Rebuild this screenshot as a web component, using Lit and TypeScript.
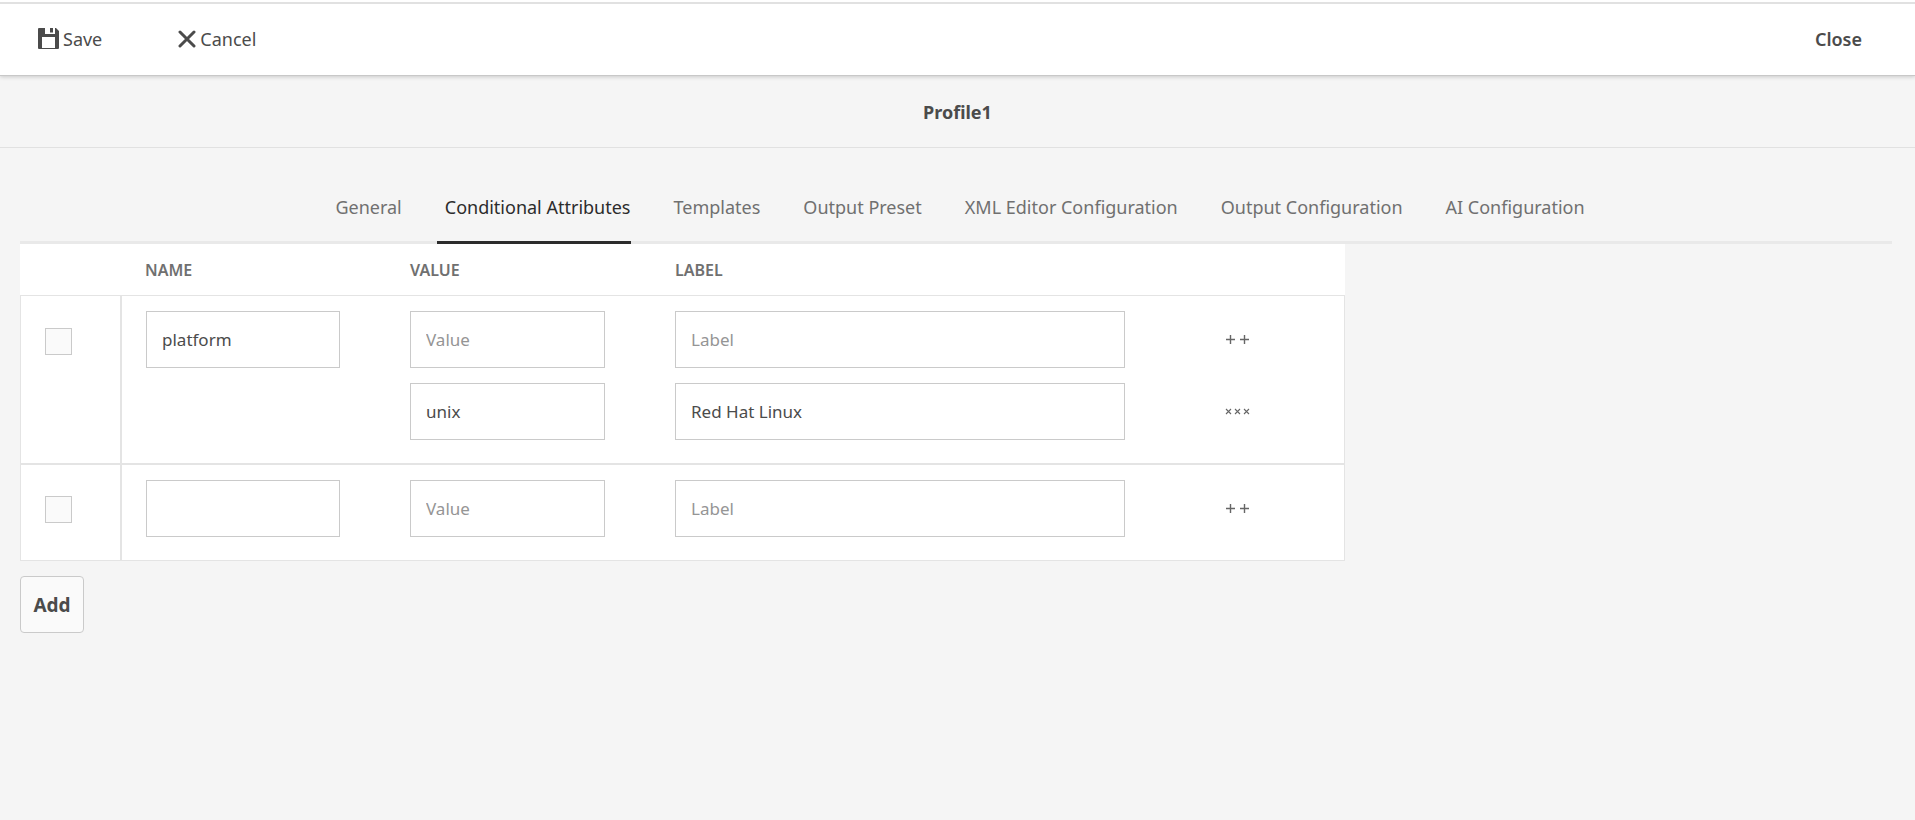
import { LitElement, html, css, svg, nothing } from "lit";
import { customElement, property, state } from "lit/decorators.js";
import { classMap } from "lit/directives/class-map.js";

interface Entry {
  value: string;
  label: string;
}

interface Attribute {
  name: string;
  entries: Entry[];
}

const TABS = [
  "General",
  "Conditional Attributes",
  "Templates",
  "Output Preset",
  "XML Editor Configuration",
  "Output Configuration",
  "AI Configuration",
];

const plus = (x: number) => svg`<path d="M${x} 4.5h9M${x + 4.5} 0v9" />`;
const cross = (x: number) => svg`<path class="thin" d="M${x} 2l5 5M${x + 5} 2l-5 5" />`;

@customElement("profile-toolbar")
export class ProfileToolbar extends LitElement {
  static styles = css`
    :host {
      display: block;
      position: relative;
      padding-top: 2px;
      background: #fff;
      border-bottom: 1px solid #c8c8c8;
      box-shadow: 0 1px 4px rgba(0, 0, 0, 0.18);
    }
    .bar {
      display: flex;
      align-items: center;
      gap: 76px;
      height: 69px;
      padding: 0 53px 2px 38px;
      border-top: 2px solid #e1e1e1;
    }
    .action {
      display: flex;
      align-items: center;
      gap: 4px;
      padding: 0;
      border: 0;
      background: none;
      color: #4b4b4b;
      font: 18px/24px "Noto Sans", sans-serif;
      cursor: pointer;
    }
    .close {
      margin-left: auto;
      font-weight: 600;
    }
    .icon {
      display: block;
      fill: #4b4b4b;
    }
    .stroke {
      fill: none;
      stroke: #4b4b4b;
      stroke-width: 3;
      stroke-linecap: round;
    }
  `;

  render() {
    return html`
      <div class="bar">
        <button class="action" type="button">
          <svg class="icon" width="21" height="21" viewBox="0 0 21 21" aria-hidden="true">
            <path
              fill-rule="evenodd"
              d="M0 1q0-1 1-1H7V6H17V0h1l3 3V20q0 1-1 1H1q-1 0-1-1ZM4 9V20H17V9ZM12 0h3V4.5h-3Z"
            />
          </svg>
          Save
        </button>
        <button class="action" type="button">
          <svg class="icon" width="18" height="18" viewBox="0 0 18 18" aria-hidden="true">
            <path class="stroke" d="M2 2L16 16M16 2L2 16" />
          </svg>
          Cancel
        </button>
        <button class="action close" type="button">Close</button>
      </div>
    `;
  }
}

@customElement("profile-tabs")
export class ProfileTabs extends LitElement {
  static styles = css`
    :host {
      display: block;
    }
    .tabs {
      display: flex;
      justify-content: center;
      gap: 35px;
      border-bottom: 3px solid #e9e9e9;
    }
    .tab {
      padding: 17px 0 22px 8px;
      margin-bottom: -3px;
      border: 0;
      border-bottom: 3px solid transparent;
      background: none;
      color: #707070;
      font: 18px/24px "Noto Sans", sans-serif;
      white-space: nowrap;
      cursor: pointer;
    }
    .selected {
      color: #2c2c2c;
      border-bottom-color: #2c2c2c;
    }
  `;

  @property() selected = "";

  render() {
    return html`
      <div class="tabs" role="tablist">
        ${TABS.map(
          (name) => html`<button
            type="button"
            role="tab"
            aria-selected=${name === this.selected}
            class=${classMap({ tab: true, selected: name === this.selected })}
            @click=${() => (this.selected = name)}
          >${name}</button>`,
        )}
      </div>
    `;
  }
}

@customElement("attribute-table")
export class AttributeTable extends LitElement {
  static styles = css`
    :host {
      display: block;
    }
    .table {
      width: calc(100% - 547px);
      min-width: 1000px;
      table-layout: fixed;
      border-collapse: separate;
      border-spacing: 0;
      background: #fff;
    }
    .check-col {
      width: 101px;
    }
    .field-col {
      width: 20%;
    }
    .action-col {
      width: 194px;
    }
    .head {
      height: 52px;
      padding: 0 0 0 24px;
      border-bottom: 1px solid #e4e4e4;
      box-sizing: border-box;
      color: #707070;
      font: 600 16px/20px "Noto Sans", sans-serif;
      text-align: left;
      text-transform: uppercase;
    }
    .cell {
      padding: 15px 0 23px 24px;
      vertical-align: top;
      border-bottom: 1px solid #e4e4e4;
    }
    .check-cell {
      padding: 32px 0 0 24px;
      border-left: 1px solid #e4e4e4;
      border-right: 1px solid #e4e4e4;
    }
    .name-cell {
      border-left: 1px solid #e4e4e4;
    }
    .last-cell {
      padding-left: 74px;
      border-right: 1px solid #e4e4e4;
    }
    .next .cell {
      border-top: 1px solid #e4e4e4;
    }
    .next .check-cell {
      padding-top: 31px;
    }
    .check {
      display: block;
      appearance: none;
      width: 27px;
      height: 27px;
      margin: 0;
      border: 1px solid #cacaca;
      background: #fafafa;
    }
    .check:checked {
      background: #4b4b4b;
    }
    .stack {
      display: grid;
      gap: 15px;
    }
    .field {
      box-sizing: border-box;
      width: calc(100% - 46px);
      height: 57px;
      padding: 0 15px;
      border: 1px solid #cacaca;
      border-radius: 0;
      background: #fff;
      color: #4b4b4b;
      font: 17px/24px "Noto Sans", sans-serif;
      outline: none;
    }
    .field:focus {
      border-color: #378ef0;
    }
    .field::placeholder {
      color: #959595;
      opacity: 1;
    }
    .wide {
      width: calc(100% - 26px);
    }
    .icon-button {
      display: flex;
      align-items: center;
      justify-self: start;
      height: 57px;
      padding: 0;
      border: 0;
      background: none;
      cursor: pointer;
    }
    .glyph {
      display: block;
      fill: none;
      stroke: #666;
      stroke-width: 1.4;
    }
    .thin {
      stroke-width: 1.1;
    }
    .add {
      display: block;
      width: 64px;
      height: 57px;
      margin-top: 15px;
      padding: 0;
      border: 1px solid #cacaca;
      border-radius: 4px;
      background: #fafafa;
      color: #4b4b4b;
      font: 700 19px/24px "Noto Sans", sans-serif;
      cursor: pointer;
    }
  `;

  @state() private rows: Attribute[] = [
    {
      name: "platform",
      entries: [
        { value: "", label: "" },
        { value: "unix", label: "Red Hat Linux" },
      ],
    },
    { name: "", entries: [{ value: "", label: "" }] },
  ];

  private addRow() {
    this.rows = [...this.rows, { name: "", entries: [{ value: "", label: "" }] }];
  }

  private addEntry(row: Attribute) {
    row.entries = [...row.entries, { value: "", label: "" }];
    this.requestUpdate();
  }

  private removeEntry(row: Attribute, entry: Entry) {
    row.entries = row.entries.filter((e) => e !== entry);
    this.requestUpdate();
  }

  private renderRow(row: Attribute, index: number) {
    return html`
      <tr class=${index > 0 ? "next" : nothing}>
        <td class="cell check-cell">
          <input class="check" type="checkbox" aria-label="Select attribute" />
        </td>
        <td class="cell name-cell">
          <input class="field" type="text" aria-label="Name" .value=${row.name} />
        </td>
        <td class="cell">
          <div class="stack">
            ${row.entries.map(
              (e) => html`<input class="field" type="text" aria-label="Value" placeholder="Value" .value=${e.value} />`,
            )}
          </div>
        </td>
        <td class="cell">
          <div class="stack">
            ${row.entries.map(
              (e) => html`<input class="field wide" type="text" aria-label="Label" placeholder="Label" .value=${e.label} />`,
            )}
          </div>
        </td>
        <td class="cell last-cell">
          <div class="stack">
            ${row.entries.map((e, i) =>
              i === 0
                ? html`<button class="icon-button" type="button" aria-label="Add value" @click=${() => this.addEntry(row)}>
                    <svg class="glyph" width="25" height="9" viewBox="0 0 25 9">${plus(1)}${plus(15)}</svg>
                  </button>`
                : html`<button class="icon-button" type="button" aria-label="Remove value" @click=${() => this.removeEntry(row, e)}>
                    <svg class="glyph" width="25" height="9" viewBox="0 0 25 9">${cross(1)}${cross(10)}${cross(19)}</svg>
                  </button>`,
            )}
          </div>
        </td>
      </tr>
    `;
  }

  render() {
    return html`
      <table class="table">
        <colgroup>
          <col class="check-col" />
          <col class="field-col" />
          <col class="field-col" />
          <col />
          <col class="action-col" />
        </colgroup>
        <thead>
          <tr>
            <th class="head"></th>
            <th class="head" scope="col">Name</th>
            <th class="head" scope="col">Value</th>
            <th class="head" scope="col">Label</th>
            <th class="head"></th>
          </tr>
        </thead>
        <tbody>
          ${this.rows.map((row, i) => this.renderRow(row, i))}
        </tbody>
      </table>
      <button class="add" type="button" @click=${this.addRow}>Add</button>
    `;
  }
}

@customElement("app-root")
export class AppRoot extends LitElement {
  static styles = css`
    :host {
      display: block;
      min-height: 100vh;
      background: #f5f5f5;
      font-family: "Noto Sans", sans-serif;
    }
    .title {
      margin: 0;
      padding: 25px 0 23px;
      border-bottom: 1px solid #e1e1e1;
      color: #4b4b4b;
      font: 700 18px/23px "Noto Sans", sans-serif;
      text-align: center;
    }
    .content {
      padding: 30px 23px 24px 20px;
    }
  `;

  render() {
    return html`
      <profile-toolbar></profile-toolbar>
      <h1 class="title">Profile1</h1>
      <main class="content">
        <profile-tabs selected="Conditional Attributes"></profile-tabs>
        <attribute-table></attribute-table>
      </main>
    `;
  }
}
